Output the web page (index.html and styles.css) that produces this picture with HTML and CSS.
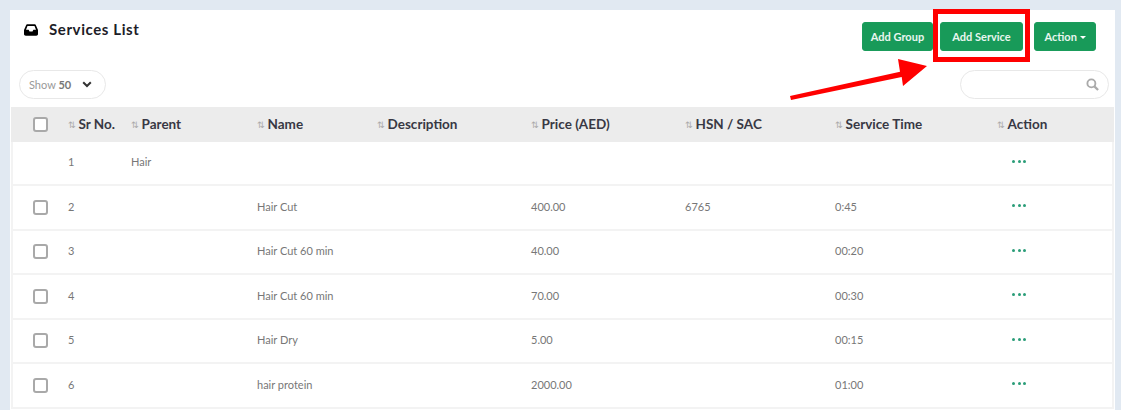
FILE: index.html
```html
<!DOCTYPE html>
<html lang="en">
<head>
<meta charset="utf-8">
<title>Services List</title>
<link rel="stylesheet" href="styles.css">
</head>
<body>
<main class="card">
  <div class="top">
    <h1 class="title">
      <svg class="inbox" viewBox="0 0 16 13" width="14" height="12"><path fill-rule="evenodd" d="M3.6 0h8.8c.5 0 .9.3 1.1.7L16 6.5V11c0 1.1-.9 2-2 2H2c-1.100 0-2-.9-2-2V6.500L2.500.7C2.700.3 3.100 0 3.600 0zM4 2 2.300 6.300H5.300L6.300 8.300H9.700L10.700 6.300H13.700L12 2z"/></svg>
      Services List
    </h1>
    <div class="actions">
      <button class="btn">Add Group</button>
      <button class="btn">Add Service</button>
      <button class="btn btn-action">Action <span class="caret"></span></button>
    </div>
  </div>
  <div class="tools">
    <div class="show">Show <b>50</b>
      <svg class="chev" viewBox="0 0 10 7" width="10" height="7"><path d="M1.200 1.200 5 5l3.800-3.800" fill="none" stroke="#333" stroke-width="2"/></svg>
    </div>
    <div class="search">
      <svg viewBox="0 0 14 14" width="13" height="13"><circle cx="5.800" cy="5.800" r="4.300" fill="none" stroke="#aaa" stroke-width="2"/><path d="m9 9 4 4" stroke="#aaa" stroke-width="2.400"/></svg>
    </div>
  </div>
  <div class="table">
    <div class="row head">
      <div class="cell"><span class="box"></span></div>
      <div class="cell"><span class="sort">⇅</span>Sr No.</div>
      <div class="cell"><span class="sort">⇅</span>Parent</div>
      <div class="cell"><span class="sort">⇅</span>Name</div>
      <div class="cell"><span class="sort">⇅</span>Description</div>
      <div class="cell"><span class="sort">⇅</span>Price (AED)</div>
      <div class="cell"><span class="sort">⇅</span>HSN / SAC</div>
      <div class="cell"><span class="sort">⇅</span>Service Time</div>
      <div class="cell"><span class="sort">⇅</span>Action</div>
    </div>
    <div class="row">
      <div class="cell"></div><div class="cell">1</div><div class="cell">Hair</div><div class="cell"></div><div class="cell"></div><div class="cell"></div><div class="cell"></div><div class="cell"></div>
      <div class="cell"><span class="dots"><i></i><i></i><i></i></span></div>
    </div>
    <div class="row">
      <div class="cell"><span class="box"></span></div><div class="cell">2</div><div class="cell"></div><div class="cell">Hair Cut</div><div class="cell"></div><div class="cell">400.00</div><div class="cell">6765</div><div class="cell">0:45</div>
      <div class="cell"><span class="dots"><i></i><i></i><i></i></span></div>
    </div>
    <div class="row">
      <div class="cell"><span class="box"></span></div><div class="cell">3</div><div class="cell"></div><div class="cell">Hair Cut 60 min</div><div class="cell"></div><div class="cell">40.00</div><div class="cell"></div><div class="cell">00:20</div>
      <div class="cell"><span class="dots"><i></i><i></i><i></i></span></div>
    </div>
    <div class="row">
      <div class="cell"><span class="box"></span></div><div class="cell">4</div><div class="cell"></div><div class="cell">Hair Cut 60 min</div><div class="cell"></div><div class="cell">70.00</div><div class="cell"></div><div class="cell">00:30</div>
      <div class="cell"><span class="dots"><i></i><i></i><i></i></span></div>
    </div>
    <div class="row">
      <div class="cell"><span class="box"></span></div><div class="cell">5</div><div class="cell"></div><div class="cell">Hair Dry</div><div class="cell"></div><div class="cell">5.00</div><div class="cell"></div><div class="cell">00:15</div>
      <div class="cell"><span class="dots"><i></i><i></i><i></i></span></div>
    </div>
    <div class="row">
      <div class="cell"><span class="box"></span></div><div class="cell">6</div><div class="cell"></div><div class="cell">hair protein</div><div class="cell"></div><div class="cell">2000.00</div><div class="cell"></div><div class="cell">01:00</div>
      <div class="cell"><span class="dots"><i></i><i></i><i></i></span></div>
    </div>
  </div>
</main>
<div class="mark"></div>
<svg class="arrow" viewBox="0 0 150 50" width="150" height="50"><path d="M1 38 L111 13.700 L109 1 L138 8 L114 28 L112.700 19 L2 42 Z" fill="#f00"/></svg>
</body>
</html>
```
FILE: styles.css
```css
* { box-sizing: border-box; }
html, body { margin: 0; height: 410px; overflow: hidden; }
body {
  background: #e1e9f2;
  padding: 10px 6px 0 10px;
  font-family: Lato, "Open Sans", sans-serif;
  position: relative;
}
.card { background: #fff; height: 400px; padding-left: 1px; }
.top { display: flex; justify-content: space-between; height: 59px; }
.title {
  margin: 11px 0 0 13px;
  font-size: 15px;
  font-weight: 700;
  line-height: 17px;
  color: #1d1d28;
  letter-spacing: .6px;
  display: flex;
  align-items: center;
  gap: 11px;
  height: 17px;
}
.actions { display: flex; padding: 12px 19px 0 0; }
.btn {
  height: 29px;
  border: 1px solid #1a9c5b;
  border-radius: 3px;
  background: #189a59;
  color: #e9f6ef;
  font: 700 11px Lato, sans-serif;
  padding: 0;
  width: 71px;
  margin-left: 7px;
}
.btn + .btn { width: 83px; }
.btn.btn-action { width: 62px; margin-left: 11px; }
.caret {
  display: inline-block;
  border: 3px solid transparent;
  border-top-color: #fff;
  border-bottom: 0;
  vertical-align: 2px;
}
.tools {
  display: flex;
  justify-content: space-between;
  align-items: flex-start;
  height: 38px;
  padding: 1px 6px 0 8px;
}
.show, .search {
  height: 29px;
  border: 1px solid #e8e8e8;
  border-radius: 15px;
  display: flex;
  align-items: center;
}
.show {
  width: 87px;
  padding-left: 9px;
  font-size: 11px;
  color: #999;
  white-space: pre;
}
.show b { color: #777; font-weight: 700; }
.chev { margin-left: 11px; }
.search { width: 149px; justify-content: flex-end; padding-right: 9px; }
.table { width: 1103px; }
.row {
  display: grid;
  grid-template-columns: 55px 63px 126px 120px 154px 154px 150px 162px 117px;
  height: 44.500px;
  align-items: center;
  border: solid #f3f3f3;
  border-width: 0 2px 2px;
  font-size: 11px;
  color: #777;
}
.row .cell { padding-bottom: 2px; }
.row .cell:first-child, .row .cell:last-child { padding-bottom: 0; }
.row .cell:first-child { margin-left: -2px; }
.row.head {
  grid-template-columns: 57px 63px 126px 120px 154px 154px 150px 162px 117px;
  height: 34.500px;
  background: #ececec;
  border: 0;
  font-size: 13.500px;
  font-weight: 700;
  color: #383844;
}
.row.head .cell { padding-bottom: 0; }
.row.head .cell:first-child { margin-left: 0; }
.cell { min-width: 0; white-space: nowrap; }
.sort { color: #aaa; font-size: 9px; font-weight: 400; margin-right: 4px; letter-spacing: -1px; font-family: "DejaVu Sans", sans-serif; vertical-align: 1px; }
.box {
  display: block;
  width: 15px;
  height: 15px;
  margin-left: 22px;
  border: 2px solid #a9a9a9;
  border-radius: 3px;
  background: #fff;
}
.dots { display: flex; gap: 2.500px; margin: 0 0 3px 15px; }
.dots i { width: 3px; height: 3px; border-radius: 50%; background: #2a9d78; }
.mark {
  position: absolute;
  left: 933px;
  top: 9px;
  width: 97px;
  height: 53px;
  border: 5px solid #f00;
}
.arrow { position: absolute; left: 789px; top: 58px; }
```
